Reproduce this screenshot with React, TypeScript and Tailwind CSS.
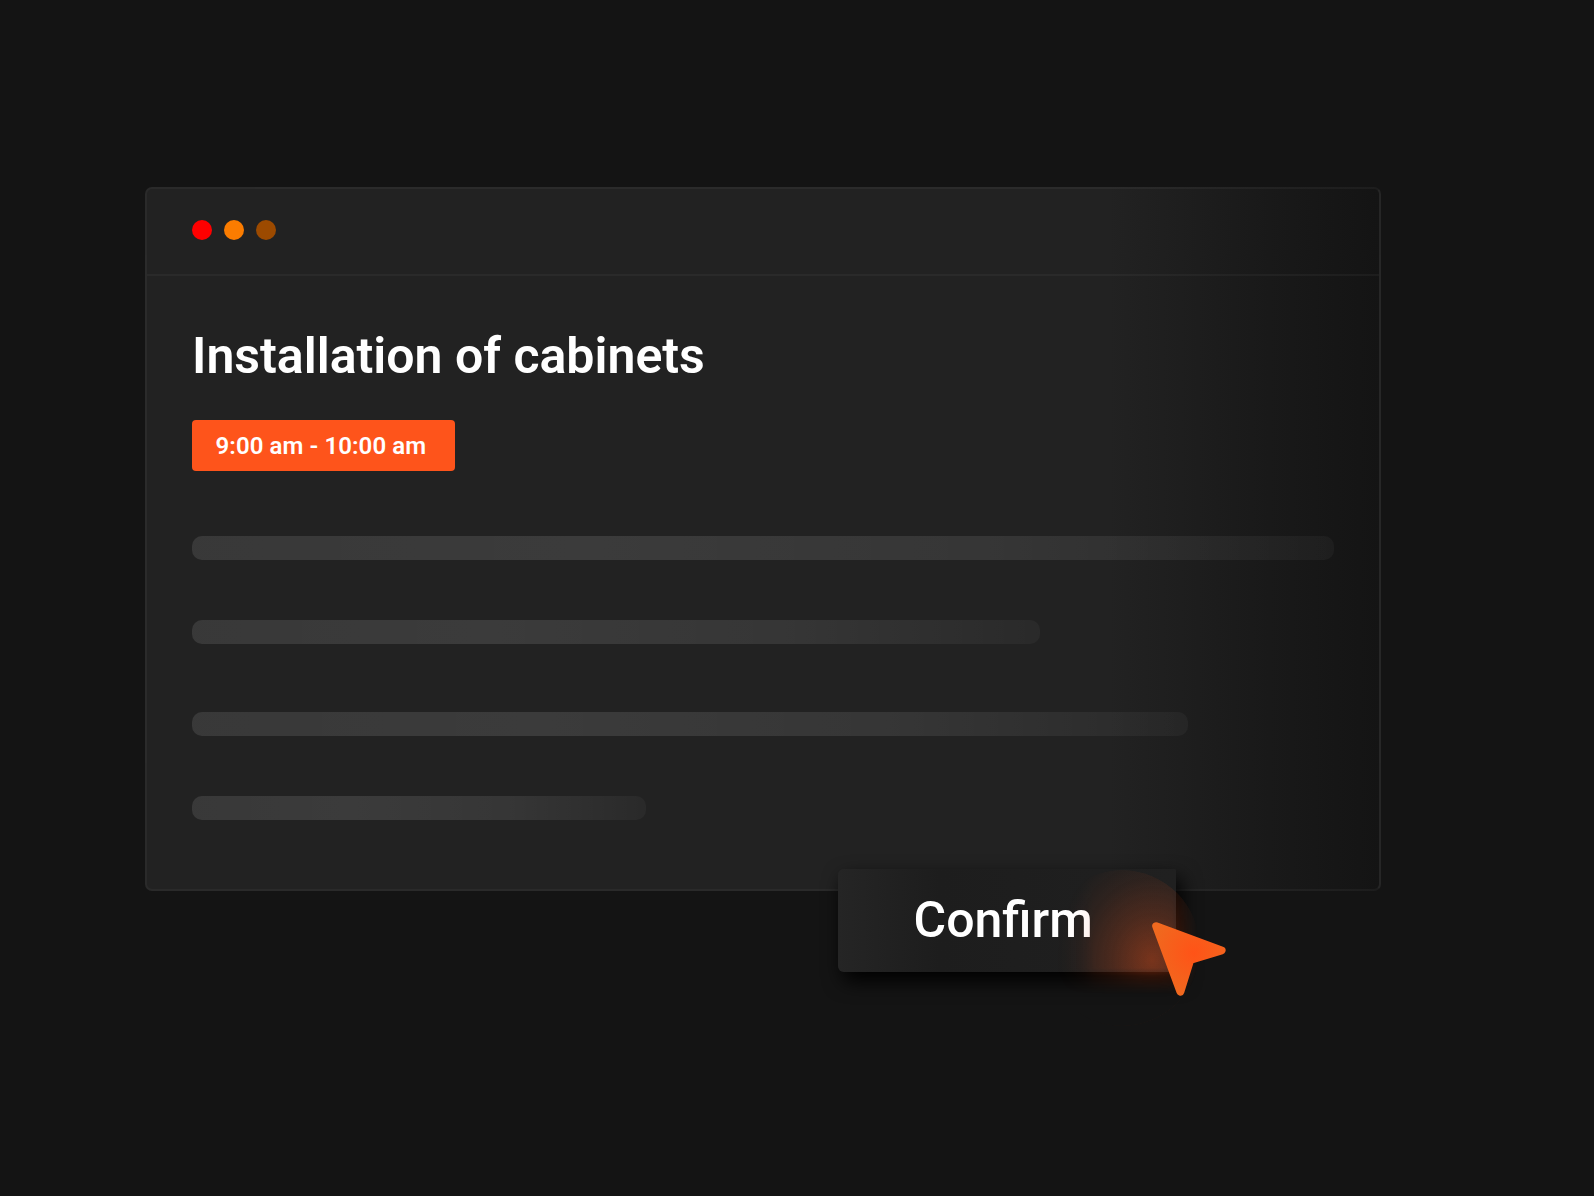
import React from 'react';

const lines = [
    'w-[1142px]',
    'w-[848px] mt-[60px]',
    'w-[996px] mt-[68px]',
    'w-[454px] mt-[60px]',
];

function TitleBar() {
    return (
        <div className="h-[87px] shrink-0 flex items-center gap-3 pl-[45px] pb-[4px] border-b-2 border-white/4">
            <span className="size-5 rounded-full bg-[#ff0000]" />
            <span className="size-5 rounded-full bg-[#fb7c00]" />
            <span className="size-5 rounded-full bg-[#9c4a00]" />
        </div>
    );
}

function Cursor() {
    return (
        <svg className="absolute left-[310px] top-[50px]" width="84" height="84" viewBox="0 0 84 84" fill="none">
            <defs>
                <radialGradient id="cursor-fill" cx="46" cy="34" r="44" gradientUnits="userSpaceOnUse">
                    <stop stopColor="#ff5317" />
                    <stop offset="1" stopColor="#f0691f" />
                </radialGradient>
            </defs>
            <path
                d="M8.2 7.2L73.6 31.4L42.2 41L32.4 72.6Z"
                fill="url(#cursor-fill)"
                stroke="url(#cursor-fill)"
                strokeWidth="8"
                strokeLinejoin="round"
            />
        </svg>
    );
}

function ConfirmButton() {
    return (
        <div className="absolute left-[838px] top-[869px]">
            <button className="relative block w-[338px] h-[103px] rounded-[6px] rounded-r-[2px] bg-linear-to-r from-[#252525] via-[#1d1d1d] via-30% to-[#202020] shadow-[5px_9px_20px_0px_#000000]">
                <span className="block pl-[75.5px] text-left text-[50px] leading-[103px] font-medium text-white">Confirm</span>
            </button>
            {/* Glow behind the pointer */}
            <div className="absolute left-[206px] top-[1px] size-[156px] rounded-full bg-[radial-gradient(ellipse_98px_112px_at_108px_90px,rgba(255,84,24,0.4)_0%,rgba(255,84,24,0.2)_40%,rgba(255,84,24,0.07)_72%,transparent_100%)] [mask-image:linear-gradient(to_bottom,#000_98px,rgba(0,0,0,0.5)_106px,transparent_124px),linear-gradient(to_right,transparent_4px,#000_50px,#000_128px,transparent_154px)] [mask-composite:intersect]" />
            <Cursor />
        </div>
    );
}

export default function App() {
    return (
        <div className="relative w-[1594px] h-[1196px] overflow-hidden bg-[#141414] pl-[145px] pt-[187px] font-[Roboto,sans-serif]">
            <div className="relative w-[1236px] h-[704px] flex flex-col rounded-[7px] border-2 border-white/4 border-r-white/8 bg-origin-border bg-[linear-gradient(to_right,#222222_78%,#191919_91%,#141414_100%)]">
                <TitleBar />
                <div className="pl-[45px] pt-[50px]">
                    <h1 className="text-[50px] leading-[60px] font-semibold text-white">Installation of cabinets</h1>
                    <div className="mt-[34px] w-[263px] h-[51px] rounded-[4px] bg-[#fe541b] pl-[23.5px] text-[24px] leading-[53px] tracking-[0.08px] font-semibold text-white">
                        9:00 am - 10:00 am
                    </div>
                    <div className="mt-[65px]">
                        {lines.map((line) => (
                            <div
                                key={line}
                                className={`h-6 rounded-[10px] bg-[linear-gradient(to_right,rgba(255,255,255,0.1)_0%,rgba(255,255,255,0.115)_35%,rgba(255,255,255,0.09)_70%,rgba(255,255,255,0.035)_100%)] ${line}`}
                            />
                        ))}
                    </div>
                </div>
            </div>
            <ConfirmButton />
        </div>
    );
}
